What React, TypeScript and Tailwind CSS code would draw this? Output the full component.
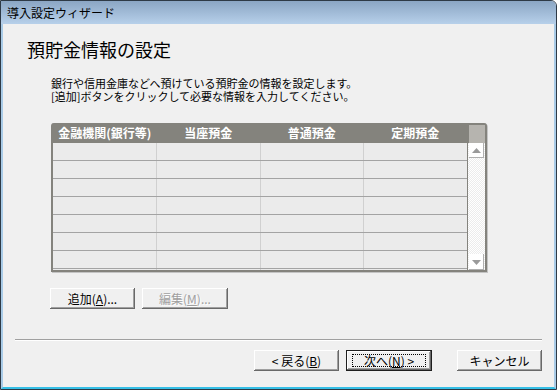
import React from "react";

const font = "font-['Noto_Sans_CJK_JP','Noto_Sans',sans-serif]";

const btnBase =
  "flex items-center justify-center bg-[#f0f0f0] text-[12px] leading-none shadow-[inset_-1px_-1px_#696969,inset_1px_1px_#ffffff,inset_-2px_-2px_#a0a0a0]";

function Button({
  children,
  className = "",
  disabled = false,
}: {
  children: React.ReactNode;
  className?: string;
  disabled?: boolean;
}) {
  return (
    <div
      className={`${btnBase} ${
        disabled ? "text-[#a0a0a0] [text-shadow:1px_1px_0_#ffffff]" : "text-black"
      } ${className}`}
    >
      {children}
    </div>
  );
}

const COLUMNS = ["金融機関(銀行等)", "当座預金", "普通預金", "定期預金"];
const ROWS = Array.from({ length: 7 });

export default function App() {
  return (
    <div className={`${font} flex h-[390px] w-[557px] flex-col overflow-hidden rounded-tr-[6px] border border-[#2e3a46] bg-[#f0f0f0]`}>
      {/* Title bar */}
      <div className="flex h-[23px] items-center bg-gradient-to-b from-[#8ba6c4] to-[#b7d0ea] pl-[6px] text-[12px] text-black">
        導入設定ウィザード
      </div>

      {/* Client */}
      <div className="flex flex-1 flex-col border-x-2 border-b-2 border-x-[#a9cbe7] border-b-[#35bfe6] bg-[#f0f0f0]">
        <h1 className="ml-[24px] mt-[14px] text-[18px] font-normal leading-[22px] text-black">
          預貯金情報の設定
        </h1>
        <div className="ml-[48px] mt-[17px] flex flex-col text-[11px] leading-[13px] text-black">
          <span>銀行や信用金庫などへ預けている預貯金の情報を設定します。</span>
          <span>[追加]ボタンをクリックして必要な情報を入力してください。</span>
        </div>

        {/* Table */}
        <div className="ml-[48px] mt-[20px] flex h-[149px] w-[436px] rounded-t-[3px] border-x-2 border-b-2 border-[#84837d] bg-[#84837d] shadow-[1px_1px_0_#c4c4c4]">
          <div className="flex w-[414px] flex-col">
            <div className="flex h-[20px]">
              {COLUMNS.map((c) => (
                <div
                  key={c}
                  className="flex flex-1 items-center justify-center text-[12px] font-bold leading-none text-white"
                >
                  {c}
                </div>
              ))}
            </div>
            <div className="flex flex-1 flex-col bg-[#ebebeb]">
              {ROWS.map((_, i) => (
                <div key={i} className="flex h-[18px] border-b border-[#a3a3a3]">
                  {COLUMNS.map((c, j) => (
                    <div
                      key={c}
                      className={`flex-1 ${j < 3 ? "border-r border-[#d0d0d0]" : ""}`}
                    />
                  ))}
                </div>
              ))}
              <div className="flex flex-1">
                {COLUMNS.map((c, j) => (
                  <div
                    key={c}
                    className={`flex-1 ${j < 3 ? "border-r border-[#d0d0d0]" : ""}`}
                  />
                ))}
              </div>
            </div>
          </div>

          {/* Scrollbar */}
          <div className="flex w-[18px] flex-col">
            <div className="ml-[2px] mt-[2px] h-[18px] w-[16px] bg-[#b6b4af]" />
            <div className="ml-[1px] flex flex-1 flex-col bg-[repeating-conic-gradient(#ffffff_0%_25%,#ececec_0%_50%)] bg-[length:2px_2px]">
              <div className="ml-[1px] flex h-[15px] w-[15px] items-center justify-center bg-white shadow-[inset_-1px_-1px_#b0b0b0,inset_1px_1px_#ffffff]">
                <svg width="9" height="5" viewBox="0 0 9 5">
                  <path d="M4.5 0 L9 5 L0 5 Z" fill="#9a9a9a" />
                </svg>
              </div>
              <div className="flex-1" />
              <div className="ml-[1px] flex h-[16px] w-[15px] items-center justify-center bg-white shadow-[inset_-1px_-1px_#b0b0b0,inset_1px_1px_#ffffff]">
                <svg width="9" height="5" viewBox="0 0 9 5">
                  <path d="M0 0 L9 0 L4.5 5 Z" fill="#9a9a9a" />
                </svg>
              </div>
            </div>
          </div>
        </div>

        {/* Add / Edit */}
        <div className="ml-[47px] mt-[16px] flex gap-[7px]">
          <Button className="h-[21px] w-[85px]">
            追加(<span className="underline">A</span>)...
          </Button>
          <Button className="h-[21px] w-[86px]" disabled>
            編集(<span className="underline">M</span>)...
          </Button>
        </div>

        {/* Separator */}
        <div className="ml-[12px] mr-[12px] mt-[30px] border-t border-b border-t-[#a0a0a0] border-b-white" />

        {/* Footer buttons */}
        <div className="mr-[12px] mt-[9px] flex justify-end">
          <Button className="h-[21px] w-[85px]">
            &lt; 戻る(<span className="underline">B</span>)
          </Button>
          <div className="ml-[7px] flex h-[21px] w-[86px] items-center justify-center border border-[#1e1e1e] bg-[#f0f0f0] shadow-[inset_-1px_-1px_#696969,inset_1px_1px_#ffffff,inset_-2px_-2px_#a0a0a0] text-[12px] leading-none text-black">
            <div className="flex h-[13px] w-[74px] items-center justify-center border border-dotted border-black">
              次へ(<span className="underline">N</span>) &gt;
            </div>
          </div>
          <Button className="ml-[25px] h-[21px] w-[85px]">キャンセル</Button>
        </div>
      </div>
    </div>
  );
}
